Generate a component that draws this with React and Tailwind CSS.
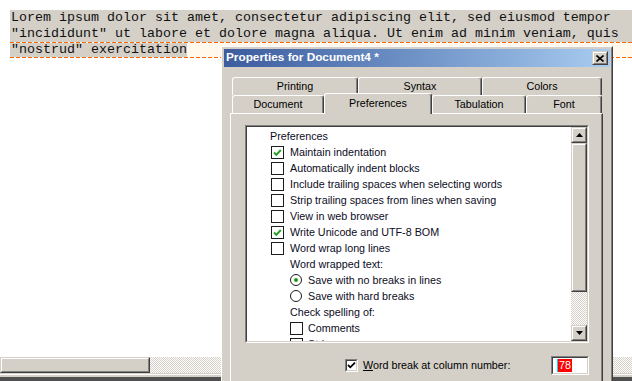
import React from "react";

const GRAY = "#d4d0c8";

function Raised({ className = "", children }) {
  return (
    <div className={"border border-t-[#d4d0c8] border-l-[#d4d0c8] border-r-[#404040] border-b-[#404040] " + className}>
      <div className="flex h-full w-full items-center justify-center border border-t-white border-l-white border-r-[#808080] border-b-[#808080] bg-[#d4d0c8]">
        {children}
      </div>
    </div>
  );
}

function Sunken({ className = "", children }) {
  return (
    <div className={"border border-t-[#808080] border-l-[#808080] border-r-white border-b-white " + className}>
      <div className="h-full w-full border border-t-[#404040] border-l-[#404040] border-r-[#d4d0c8] border-b-[#d4d0c8] bg-white">
        {children}
      </div>
    </div>
  );
}

function FlatCheck({ checked }) {
  return (
    <div className="flex h-[13px] w-[13px] shrink-0 items-center justify-center border border-[#1c1c1c] bg-white">
      {checked && (
        <svg width="11" height="11" viewBox="0 0 11 11">
          <polyline points="2,5.5 4.3,7.8 8.8,3" fill="none" stroke="#21a121" strokeWidth="1.9" />
        </svg>
      )}
    </div>
  );
}

function Radio({ checked }) {
  return (
    <div className="flex h-[12px] w-[12px] shrink-0 items-center justify-center rounded-full border border-[#1c1c1c] bg-white">
      {checked && <div className="h-[4px] w-[4px] rounded-full bg-[#1a9c1a]" />}
    </div>
  );
}

function CheckRow({ label, checked }) {
  return (
    <div className="flex h-[16px] items-center pl-[24px]">
      <FlatCheck checked={checked} />
      <span className="ml-[6px] whitespace-nowrap">{label}</span>
    </div>
  );
}

function Tab({ w, children }) {
  return (
    <div
      className={
        "flex h-[18px] shrink-0 items-center justify-center rounded-t-[3px] border-l border-t border-r border-l-white border-t-white border-r-[#404040] bg-[#d4d0c8] shadow-[inset_-1px_0_0_#808080] " +
        w
      }
    >
      {children}
    </div>
  );
}

function DashLine() {
  return <div className="h-[1px] w-full bg-[repeating-linear-gradient(90deg,#ff6600_0px_4px,transparent_4px_6px)]" />;
}

export default function App() {
  return (
    <div className="relative h-[381px] w-[632px] overflow-hidden bg-white">
      {/* Editor */}
      <div className="flex h-full flex-col font-['Liberation_Mono',monospace] text-[13.33px] text-[#111]">
        <div className="pt-[10px]">
          <div className="ml-[10px] h-[16px] whitespace-pre bg-[#d4d0c8] pl-[1px] leading-[16px]">
            Lorem ipsum dolor sit amet, consectetur adipiscing elit, sed eiusmod tempor
          </div>
          <div className="ml-[10px] h-[16px] whitespace-pre bg-[#d4d0c8] pl-[1px] leading-[16px]">
            "incididunt" ut labore et dolore magna aliqua. Ut enim ad minim veniam, quis
          </div>
          <div className="ml-[10px] flex flex-col">
            <DashLine />
            <div className="flex h-[14px] bg-[#fff8ec] leading-[14px]">
              <span className="whitespace-pre bg-[#d4d0c8] pl-[1px]">"nostrud" exercitation</span>
            </div>
            <DashLine />
          </div>
        </div>
        <div className="flex-1" />
        {/* Horizontal scrollbar */}
        <div className="flex h-[16px]">
          <Raised className="h-[16px] w-[150px]" />
          <div className="flex-1 bg-[repeating-conic-gradient(#d4d0c8_0%_25%,#ffffff_0%_50%)] bg-[length:2px_2px]" />
        </div>
        <div className="h-[1px] bg-[#d4d0c8]" />
        <div className="h-[1px] bg-white" />
        <div className="h-[2px] bg-[#d4d0c8]" />
        <div className="h-[4px] bg-[#505050]" />
      </div>

      {/* Dialog */}
      <div className="absolute left-[221px] top-[46px] h-[340px] w-[392px] border border-t-white border-l-white border-r-[#404040] border-b-[#404040] font-['Liberation_Sans',Arial,sans-serif] text-[10.75px] text-black">
        <div className="h-full w-full border border-t-[#d4d0c8] border-l-[#d4d0c8] border-r-[#808080] border-b-[#808080] bg-[#d4d0c8] p-[1px]">
          {/* Title bar */}
          <div className="flex h-[18px] items-center bg-gradient-to-r from-[#3c5c9e] to-[#a8ccf0] pl-[2px] pr-[2px]">
            <span className="text-[11.8px] font-bold text-white">Properties for Document4 *</span>
            <Raised className="ml-auto h-[14px] w-[16px]">
              <svg width="8" height="7" viewBox="0 0 8 7">
                <path d="M0.5 0.5 L7.5 6.5 M7.5 0.5 L0.5 6.5" stroke="#000" strokeWidth="1.6" />
              </svg>
            </Raised>
          </div>

          {/* Tabs */}
          <div className="ml-[8px] mt-[10px] flex h-[18px]">
            <Tab w="w-[126px]">Printing</Tab>
            <Tab w="w-[124px]">Syntax</Tab>
            <Tab w="w-[120px]">Colors</Tab>
          </div>
          <div className="ml-[8px] flex h-[18px] items-end">
            <Tab w="w-[92px]">Document</Tab>
            <div className="relative z-10 -mb-[1px] flex h-[21px] w-[108px] shrink-0 items-center justify-center rounded-t-[3px] border-l border-t border-r border-l-white border-t-white border-r-[#404040] bg-[#d4d0c8] pb-[2px] shadow-[inset_-1px_0_0_#808080]">
              Preferences
            </div>
            <Tab w="w-[94px]">Tabulation</Tab>
            <Tab w="w-[76px]">Font</Tab>
          </div>

          {/* Panel */}
          <div className="ml-[6px] h-[300px] w-[373px] border-l border-t border-r border-l-white border-t-white border-r-[#404040] shadow-[inset_-1px_0_0_#808080]">
            <Sunken className="ml-[14px] mt-[11px] h-[218px] w-[344px]">
              <div className="flex h-full">
                <div className="flex-1 overflow-hidden pt-[1px] text-[#0c0c24]">
                  <div className="flex h-[16px] items-center pl-[23px]">Preferences</div>
                  <CheckRow label="Maintain indentation" checked />
                  <CheckRow label="Automatically indent blocks" />
                  <CheckRow label="Include trailing spaces when selecting words" />
                  <CheckRow label="Strip trailing spaces from lines when saving" />
                  <CheckRow label="View in web browser" />
                  <CheckRow label="Write Unicode and UTF-8 BOM" checked />
                  <CheckRow label="Word wrap long lines" />
                  <div className="flex h-[16px] items-center pl-[43px]">Word wrapped text:</div>
                  <div className="flex h-[16px] items-center pl-[43px]">
                    <Radio checked />
                    <span className="ml-[6px]">Save with no breaks in lines</span>
                  </div>
                  <div className="flex h-[16px] items-center pl-[43px]">
                    <Radio />
                    <span className="ml-[6px]">Save with hard breaks</span>
                  </div>
                  <div className="flex h-[16px] items-center pl-[43px]">Check spelling of:</div>
                  <div className="flex h-[16px] items-center pl-[43px]">
                    <FlatCheck />
                    <span className="ml-[5px]">Comments</span>
                  </div>
                  <div className="flex h-[16px] items-center pl-[43px]">
                    <FlatCheck />
                    <span className="ml-[5px]">Strings</span>
                  </div>
                </div>
                {/* Vertical scrollbar */}
                <div className="flex w-[16px] flex-col">
                  <Raised className="h-[16px] w-[16px]">
                    <svg width="7" height="4" viewBox="0 0 7 4">
                      <polygon points="0,4 3.5,0 7,4" fill="#000" />
                    </svg>
                  </Raised>
                  <Raised className="h-[149px] w-[16px]" />
                  <div className="flex-1 bg-[repeating-conic-gradient(#d4d0c8_0%_25%,#ffffff_0%_50%)] bg-[length:2px_2px]" />
                  <Raised className="h-[16px] w-[16px]">
                    <svg width="7" height="4" viewBox="0 0 7 4">
                      <polygon points="0,0 7,0 3.5,4" fill="#000" />
                    </svg>
                  </Raised>
                </div>
              </div>
            </Sunken>

            {/* Bottom row */}
            <div className="ml-[14px] mt-[13px] flex h-[19px] w-[344px] items-center">
              <Sunken className="ml-[100px] h-[13px] w-[13px]">
                <div className="flex h-full w-full items-center justify-center">
                  <svg width="9" height="9" viewBox="0 0 9 9">
                    <polyline points="1,4 3.3,6.3 8,1.6" fill="none" stroke="#000" strokeWidth="1.8" />
                  </svg>
                </div>
              </Sunken>
              <span className="ml-[5px] whitespace-nowrap">
                <span className="underline">W</span>ord break at column number:
              </span>
              <Sunken className="ml-auto h-[19px] w-[38px]">
                <div className="flex h-full items-center pl-[4px]">
                  <div className="h-[13px] w-[1px] bg-[#00d8ff]" />
                  <span className="bg-[#ff0000] px-[1px] leading-[13px] text-white">78</span>
                </div>
              </Sunken>
            </div>
          </div>
        </div>
      </div>
    </div>
  );
}
